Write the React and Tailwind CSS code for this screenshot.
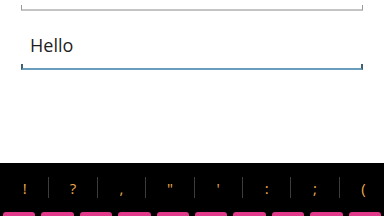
import React from "react";

const symbols = ["!", "?", ",", "\"", "'", ":", ";", "("];

export default function App() {
  return (
    <div
      className="w-[384px] h-[216px] bg-white flex flex-col overflow-hidden"
      style={{ fontFamily: '"Open Sans", "Noto Sans", sans-serif' }}
    >
      {/* first field underline */}
      <div className="mt-[5px] mx-[21px] h-[6px] shrink-0 border-x border-b-2 border-x-[#9a9a9a] border-b-[#c4c4c4]" />

      {/* second field */}
      <div className="mx-[21px] flex flex-col shrink-0">
        <div className="mt-[22px] h-[24px] pl-[9px] text-[18px] leading-[24px] text-[#1e1e1e]">
          Hello
        </div>
        <div className="mt-[7px] h-[6px] border-x-2 border-b-2 border-x-[#3f5f74] border-b-[#6a9cbc]" />
      </div>

      <div className="flex-1" />

      {/* keyboard */}
      <div className="h-[53px] bg-black flex flex-col shrink-0 overflow-hidden">
        <div className="h-[49px] shrink-0 flex items-center pl-[1px]">
          {symbols.map((s, i) => (
            <React.Fragment key={i}>
              {i > 0 && <div className="w-px h-[21px] bg-[#3c3c3c] shrink-0" />}
              <div className="w-[47.4px] shrink-0 flex items-center justify-center text-[15px] leading-none text-[#eaa84e] pt-[2px]">
                {s}
              </div>
            </React.Fragment>
          ))}
        </div>
        <div className="flex shrink-0 px-[3px] gap-[6px]">
          {Array.from({ length: 10 }).map((_, i) => (
            <div key={i} className="flex-1 h-[20px] bg-[#e23a8a] rounded-t-[3px]" />
          ))}
        </div>
      </div>
    </div>
  );
}
